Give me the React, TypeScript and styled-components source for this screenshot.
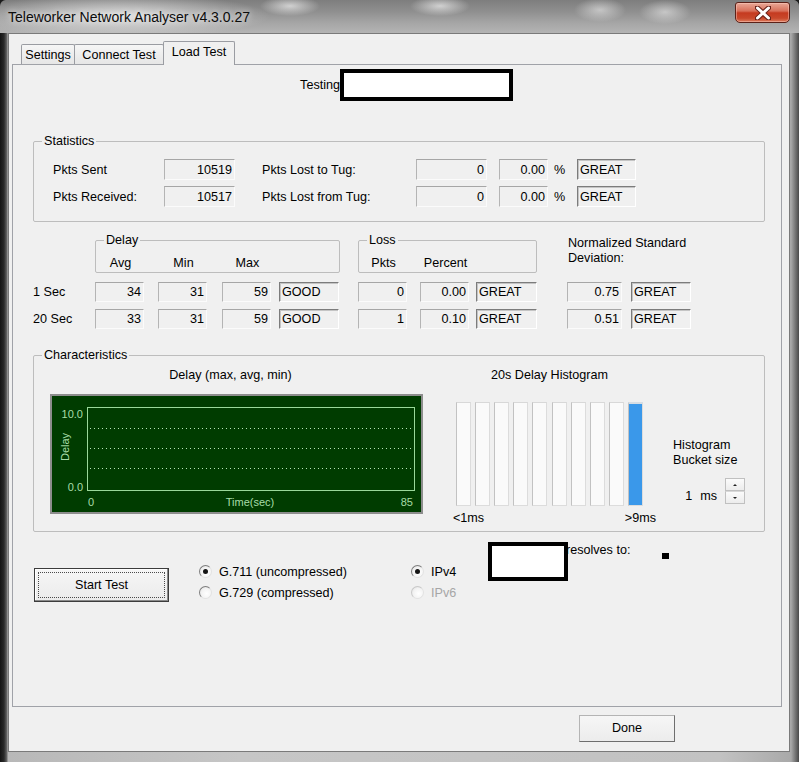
import React from 'react'
import styled, { createGlobalStyle } from 'styled-components'

const GlobalStyle = createGlobalStyle`
  html, body {
    margin: 0;
    padding: 0;
    background: #1b1b1b;
  }
  body {
    font-family: "Liberation Sans", Arial, sans-serif;
  }
`

const Window = styled.div`
  width: 799px;
  height: 762px;
  box-sizing: border-box;
  display: flex;
  flex-direction: column;
  overflow: hidden;
  border-radius: 6px 6px 0 0;
  background: linear-gradient(to right, #141414 0, #2a2a2a 4px, #6a6a6a 7px, #b8b8b8 8px, #c6c6c6 30%, #c2c2c2 90%, #a9a9a9 99%, #4a4a4a 100%);
  font-family: "Liberation Sans", Arial, sans-serif;
  font-size: 12.6px;
  color: #000;
`

const TitleBar = styled.div`
  flex: none;
  height: 33px;
  box-sizing: border-box;
  display: flex;
  justify-content: space-between;
  align-items: flex-start;
  padding: 0 9px 0 8px;
  background:
    radial-gradient(ellipse 150px 22px at 120px 16px, rgba(226, 226, 226, 0.95), rgba(226, 226, 226, 0) 100%),
    radial-gradient(ellipse 30px 10px at 290px 6px, rgba(240, 240, 240, 0.7), rgba(240, 240, 240, 0) 100%),
    radial-gradient(ellipse 30px 10px at 440px 6px, rgba(240, 240, 240, 0.7), rgba(240, 240, 240, 0) 100%),
    radial-gradient(ellipse 26px 12px at 600px 10px, rgba(235, 235, 235, 0.6), rgba(235, 235, 235, 0) 100%),
    radial-gradient(ellipse 26px 12px at 665px 12px, rgba(235, 235, 235, 0.6), rgba(235, 235, 235, 0) 100%),
    linear-gradient(to bottom, #7e7e7e 0, #8f8f8f 35%, #a6a6a6 70%, #b4b4b4 100%);
`

const Title = styled.div`
  margin-top: 8px;
  font-size: 14px;
  line-height: 18px;
  color: #0c0c0c;
  text-shadow: 0 0 6px rgba(255, 255, 255, 0.9);
`

const CloseButton = styled.div`
  margin-top: 2px;
  width: 55px;
  height: 21px;
  box-sizing: border-box;
  border: 1px solid #5b2118;
  border-radius: 3px 3px 5px 5px;
  background: linear-gradient(to bottom, #e9a897 0%, #d8705a 42%, #c53a20 52%, #c9482b 80%, #de7d5e 100%);
  box-shadow: inset 0 0 0 1px rgba(255, 210, 200, 0.45);
  display: flex;
  align-items: center;
  justify-content: center;
`

const Client = styled.div`
  flex: 1;
  margin: 0 9px 10px 8px;
  box-sizing: border-box;
  border: 1px solid #7a7a7a;
  background: #f0f0f0;
  padding: 7px 7px 0 3px;
  display: flex;
  flex-direction: column;
  min-height: 0;
`

const TabStrip = styled.div`
  flex: none;
  height: 23px;
  display: flex;
  align-items: flex-end;
  padding-left: 9px;
`

const Tab = styled.div<{ $w: number; $active?: boolean }>`
  box-sizing: border-box;
  width: ${p => p.$w}px;
  height: ${p => (p.$active ? 24 : 20)}px;
  margin-left: -1px;
  margin-bottom: ${p => (p.$active ? -1 : 0)}px;
  border: 1px solid #9a9ca2;
  border-bottom: none;
  border-radius: 2px 2px 0 0;
  background: ${p => (p.$active ? '#f0f0f0' : 'linear-gradient(to bottom, #f6f6f6, #eeeeee 50%, #e6e6e6)')};
  display: flex;
  align-items: center;
  justify-content: center;
  padding-bottom: ${p => (p.$active ? 3 : 0)}px;
  position: relative;
  z-index: ${p => (p.$active ? 1 : 0)};
  &:first-child {
    margin-left: 0;
  }
`

const Panel = styled.div`
  flex: 1;
  min-height: 0;
  box-sizing: border-box;
  border: 1px solid #a0a2a8;
  background: #f0f0f0;
  padding: 4px 16px 0 20px;
  display: flex;
  flex-direction: column;
`

const TestingRow = styled.div`
  display: flex;
  align-items: center;
  height: 32px;
`

const TestingLabel = styled.div`
  width: 307px;
  text-align: right;
`

const Redacted = styled.div<{ $w: number; $h: number }>`
  box-sizing: border-box;
  width: ${p => p.$w}px;
  height: ${p => p.$h}px;
  border: 4px solid #000;
  background: #fff;
  flex: none;
  position: relative;
  z-index: 1;
`

const Group = styled.fieldset<{ $w?: number; $mt?: number }>`
  margin: ${p => p.$mt ?? 0}px 0 0 0;
  padding: 0;
  min-width: 0;
  box-sizing: border-box;
  width: ${p => (p.$w ? `${p.$w}px` : 'auto')};
  border: 1px solid #bdbdbd;
  border-radius: 2px;
`

const Legend = styled.legend`
  margin-left: 8px;
  padding: 0 2px;
  line-height: 14px;
`

const StatsBody = styled.div`
  padding: 11px 0 14px 19px;
  display: flex;
  flex-direction: column;
  gap: 6px;
`

const StatRow = styled.div`
  display: flex;
  align-items: center;
  height: 21px;
`

const Label = styled.div<{ $w?: number; $ml?: number }>`
  flex: none;
  width: ${p => (p.$w ? `${p.$w}px` : 'auto')};
  margin-left: ${p => p.$ml ?? 0}px;
  white-space: nowrap;
`

const Field = styled.div<{ $w: number; $h?: number; $ml?: number }>`
  flex: none;
  box-sizing: border-box;
  width: ${p => p.$w}px;
  height: ${p => p.$h ?? 20}px;
  margin-left: ${p => p.$ml ?? 0}px;
  border-top: 1px solid #a6a6a6;
  border-left: 1px solid #b4b4b4;
  border-right: 1px solid #fbfbfb;
  border-bottom: 1px solid #fbfbfb;
  background: #f0f0f0;
  display: flex;
  align-items: center;
  justify-content: flex-end;
  padding-right: 2px;
`

const Rating = styled(Field)`
  justify-content: flex-start;
  padding: 0 0 0 2px;
  border-top: 1px solid #7c7c7c;
  border-left: 1px solid #7c7c7c;
  box-shadow: inset 1px 1px 0 #c4c4c4;
  border-right: 1px solid #ffffff;
  border-bottom: 1px solid #ffffff;
`

const Percent = styled.div`
  flex: none;
  width: 29px;
  padding-left: 6px;
  box-sizing: border-box;
`

const Sections = styled.div`
  display: flex;
  margin-top: 11px;
`

const Column = styled.div<{ $w: number; $ml?: number }>`
  flex: none;
  width: ${p => p.$w}px;
  margin-left: ${p => p.$ml ?? 0}px;
  display: flex;
  flex-direction: column;
`

const HeaderArea = styled.div`
  height: 49px;
  box-sizing: border-box;
`

const HeaderGrid = styled.div<{ $cols: string }>`
  display: grid;
  grid-template-columns: ${p => p.$cols};
  padding: 9px 0 2px 0;
  line-height: 14px;
  text-align: center;
`

const NsdText = styled.div`
  padding: 3px 0 0 1px;
  line-height: 15px;
  white-space: nowrap;
`

const RowLabel = styled.div`
  height: 20px;
  display: flex;
  align-items: center;
`

const Rows = styled.div`
  display: flex;
  flex-direction: column;
  gap: 7px;
`

const ValueRow = styled.div`
  display: flex;
  align-items: center;
`

const CharBody = styled.div`
  display: flex;
  align-items: flex-start;
  padding: 6px 0 6px 16px;
`

const PlotTitle = styled.div<{ $shift?: number }>`
  line-height: 14px;
  text-align: center;
  white-space: nowrap;
  padding-right: ${p => p.$shift ?? 0}px;
`

const ChartSvg = styled.svg`
  display: block;
  margin-top: 12px;
`

const Bars = styled.div`
  margin-top: 20px;
  height: 104px;
  display: flex;
  justify-content: space-between;
`

const Bar = styled.div<{ $fill?: boolean }>`
  box-sizing: border-box;
  width: 15px;
  height: 100%;
  border: 1px solid #dcdcdc;
  border-left-color: #c2c2c2;
  border-top: ${p => (p.$fill ? '2px solid #d6dde4' : '1px solid #d8d8d8')};
  background: ${p => (p.$fill ? '#3a98ea' : '#fafafa')};
`

const BarLabels = styled.div`
  margin: 5px -13px 0 -3px;
  line-height: 14px;
  display: flex;
  justify-content: space-between;
`

const BucketText = styled.div`
  padding-top: 70px;
  line-height: 15px;
  white-space: nowrap;
`

const SpinRow = styled.div`
  margin-top: 10px;
  display: flex;
  align-items: flex-end;
  justify-content: flex-end;
`

const SpinText = styled.div<{ $mr: number }>`
  line-height: 14px;
  margin-right: ${p => p.$mr}px;
  padding-bottom: 1px;
`

const Spinner = styled.div`
  width: 20px;
  display: flex;
  flex-direction: column;
`

const SpinHalf = styled.div<{ $down?: boolean }>`
  box-sizing: border-box;
  height: 13px;
  border: 1px solid #c0c0c0;
  border-top-color: ${p => (p.$down ? '#d8d8d8' : '#c0c0c0')};
  background: linear-gradient(to bottom, #fbfbfb, #ececec);
  display: flex;
  align-items: center;
  justify-content: center;
  &::after {
    content: '';
    border-left: 2px solid transparent;
    border-right: 2px solid transparent;
    ${p => (p.$down ? 'border-top: 2px solid #222;' : 'border-bottom: 2px solid #222;')}
  }
`

const BottomRow = styled.div`
  display: flex;
  align-items: flex-start;
  padding-left: 1px;
`

const StartButton = styled.div`
  margin-top: 36px;
  box-sizing: border-box;
  width: 135px;
  height: 34px;
  border: 1px solid #3c3c3c;
  background: linear-gradient(to bottom, #f6f6f6, #ebebeb);
  box-shadow: inset -1px -1px 0 #8a8a8a, inset 1px 1px 0 #ffffff;
  padding: 3px;
  display: flex;
`

const FocusRing = styled.div`
  flex: 1;
  border: 1px dotted #4a4a4a;
  display: flex;
  align-items: center;
  justify-content: center;
  padding-bottom: 1px;
`

const RadioGroup = styled.div<{ $w: number; $ml?: number }>`
  flex: none;
  width: ${p => p.$w}px;
  margin-left: ${p => p.$ml ?? 0}px;
  margin-top: 29px;
  display: flex;
  flex-direction: column;
`

const RadioRow = styled.div<{ $disabled?: boolean }>`
  display: flex;
  align-items: center;
  gap: 7px;
  height: 21px;
  white-space: nowrap;
  color: ${p => (p.$disabled ? '#a6a6a6' : '#000')};
`

const Radio = styled.span<{ $checked?: boolean; $disabled?: boolean }>`
  box-sizing: border-box;
  width: 13px;
  height: 13px;
  flex: none;
  border-radius: 50%;
  border: 1px solid ${p => (p.$disabled ? '#c8c8c8' : '#7e7e7e')};
  border-right-color: #e2e2e2;
  border-bottom-color: #e2e2e2;
  background: radial-gradient(circle at 60% 60%, #ffffff 0, #f3f3f3 55%, #d9d9d9 100%);
  display: flex;
  align-items: center;
  justify-content: center;
  &::after {
    content: '';
    width: 5px;
    height: 5px;
    border-radius: 50%;
    background: ${p => (p.$checked ? '#141414' : 'transparent')};
  }
`

const ResolveBlock = styled.div`
  display: flex;
  align-items: flex-start;
  margin-top: 10px;
`

const ResolveText = styled.div`
  margin: 1px 0 0 -2px;
  line-height: 14px;
  white-space: nowrap;
`

const Dot = styled.div`
  margin: 11px 0 0 32px;
  width: 7px;
  height: 6px;
  background: #000;
`

const Footer = styled.div`
  flex: none;
  display: flex;
  justify-content: flex-end;
  padding: 8px 107px 9px 0;
`

const DoneButton = styled.div`
  box-sizing: border-box;
  width: 96px;
  height: 27px;
  border: 1px solid #b4b4b4;
  border-right-color: #6e6e6e;
  border-bottom-color: #6e6e6e;
  background: linear-gradient(to bottom, #f6f6f6, #ececec);
  display: flex;
  align-items: center;
  justify-content: center;
  padding-bottom: 1px;
`

const CloseGlyph = () => (
  <svg width="16" height="14" viewBox="0 0 16 14">
    <path d="M2 1.5 L14 12.5 M14 1.5 L2 12.5" stroke="#6b231a" strokeWidth="5" strokeLinecap="round" />
    <path d="M2.5 2 L13.5 12 M13.5 2 L2.5 12" stroke="#ffffff" strokeWidth="3" strokeLinecap="round" />
  </svg>
)

const DelayChart = () => (
  <ChartSvg width={373} height={120} viewBox="0 0 373 120">
    <rect x={1} y={1} width={371} height={118} fill="#003c00" stroke="#8d8d8d" strokeWidth={2} />
    <rect x={37.5} y={13.5} width={327} height={83} fill="none" stroke="#9ad89a" strokeWidth={1} />
    {[34, 54, 74].map(y => (
      <line key={y} x1={40} x2={362} y1={y + 0.5} y2={y + 0.5} stroke="#b5e3b5" strokeDasharray="1 3" />
    ))}
    <g fill="#a8dca8" fontSize={11} fontFamily='"Liberation Sans", Arial, sans-serif'>
      <text x={33} y={24} textAnchor="end">10.0</text>
      <text x={33} y={97} textAnchor="end">0.0</text>
      <text transform="translate(19 53) rotate(-90)" textAnchor="middle">Delay</text>
      <text x={38} y={112}>0</text>
      <text x={200} y={112} textAnchor="middle">Time(sec)</text>
      <text x={363} y={112} textAnchor="end">85</text>
    </g>
  </ChartSvg>
)

const delayRows = [
  { label: '1 Sec', avg: 34, min: 31, max: 59, rate: 'GOOD', pkts: 0, pct: '0.00', lossRate: 'GREAT', nsd: '0.75', nsdRate: 'GREAT' },
  { label: '20 Sec', avg: 33, min: 31, max: 59, rate: 'GOOD', pkts: 1, pct: '0.10', lossRate: 'GREAT', nsd: '0.51', nsdRate: 'GREAT' },
]

const App = () => {
  return (
    <>
      <GlobalStyle />
      <Window>
        <TitleBar>
          <Title>Teleworker Network Analyser v4.3.0.27</Title>
          <CloseButton>
            <CloseGlyph />
          </CloseButton>
        </TitleBar>
        <Client>
          <TabStrip>
            <Tab $w={54}>Settings</Tab>
            <Tab $w={90}>Connect Test</Tab>
            <Tab $w={72} $active>Load Test</Tab>
          </TabStrip>
          <Panel>
            <TestingRow>
              <TestingLabel>Testing</TestingLabel>
              <Redacted $w={173} $h={32} />
            </TestingRow>

            <Group $mt={33}>
              <Legend>Statistics</Legend>
              <StatsBody>
                <StatRow>
                  <Label $w={111}>Pkts Sent</Label>
                  <Field $w={71} $h={21}>10519</Field>
                  <Label $w={154} $ml={27}>Pkts Lost to Tug:</Label>
                  <Field $w={71} $h={21}>0</Field>
                  <Field $w={49} $h={21} $ml={12}>0.00</Field>
                  <Percent>%</Percent>
                  <Rating $w={59} $h={21}>GREAT</Rating>
                </StatRow>
                <StatRow>
                  <Label $w={111}>Pkts Received:</Label>
                  <Field $w={71} $h={21}>10517</Field>
                  <Label $w={154} $ml={27}>Pkts Lost from Tug:</Label>
                  <Field $w={71} $h={21}>0</Field>
                  <Field $w={49} $h={21} $ml={12}>0.00</Field>
                  <Percent>%</Percent>
                  <Rating $w={59} $h={21}>GREAT</Rating>
                </StatRow>
              </StatsBody>
            </Group>

            <Sections>
              <Column $w={62}>
                <HeaderArea />
                <Rows>
                  {delayRows.map(r => (
                    <RowLabel key={r.label}>{r.label}</RowLabel>
                  ))}
                </Rows>
              </Column>
              <Column $w={245}>
                <HeaderArea>
                  <Group>
                    <Legend>Delay</Legend>
                    <HeaderGrid $cols="49px 14px 49px 15px 49px 1fr">
                      <span>Avg</span>
                      <span />
                      <span>Min</span>
                      <span />
                      <span>Max</span>
                    </HeaderGrid>
                  </Group>
                </HeaderArea>
                <Rows>
                  {delayRows.map(r => (
                    <ValueRow key={r.label}>
                      <Field $w={49}>{r.avg}</Field>
                      <Field $w={49} $ml={14}>{r.min}</Field>
                      <Field $w={49} $ml={15}>{r.max}</Field>
                      <Rating $w={60} $ml={8}>{r.rate}</Rating>
                    </ValueRow>
                  ))}
                </Rows>
              </Column>
              <Column $w={179} $ml={18}>
                <HeaderArea>
                  <Group>
                    <Legend>Loss</Legend>
                    <HeaderGrid $cols="49px 13px 49px 1fr">
                      <span>Pkts</span>
                      <span />
                      <span>Percent</span>
                    </HeaderGrid>
                  </Group>
                </HeaderArea>
                <Rows>
                  {delayRows.map(r => (
                    <ValueRow key={r.label}>
                      <Field $w={49}>{r.pkts}</Field>
                      <Field $w={49} $ml={13}>{r.pct}</Field>
                      <Rating $w={61} $ml={7}>{r.lossRate}</Rating>
                    </ValueRow>
                  ))}
                </Rows>
              </Column>
              <Column $w={130} $ml={30}>
                <HeaderArea>
                  <NsdText>
                    Normalized Standard
                    <br />
                    Deviation:
                  </NsdText>
                </HeaderArea>
                <Rows>
                  {delayRows.map(r => (
                    <ValueRow key={r.label}>
                      <Field $w={55}>{r.nsd}</Field>
                      <Rating $w={60} $ml={9}>{r.nsdRate}</Rating>
                    </ValueRow>
                  ))}
                </Rows>
              </Column>
            </Sections>

            <Group $mt={19}>
              <Legend>Characteristics</Legend>
              <CharBody>
                <Column $w={373}>
                  <PlotTitle $shift={12}>Delay (max, avg, min)</PlotTitle>
                  <DelayChart />
                </Column>
                <Column $w={187} $ml={33}>
                  <PlotTitle>20s Delay Histogram</PlotTitle>
                  <Bars>
                    {Array.from({ length: 10 }, (_, i) => (
                      <Bar key={i} $fill={i === 9} />
                    ))}
                  </Bars>
                  <BarLabels>
                    <span>&lt;1ms</span>
                    <span>&gt;9ms</span>
                  </BarLabels>
                </Column>
                <Column $w={72} $ml={30}>
                  <BucketText>
                    Histogram
                    <br />
                    Bucket size
                  </BucketText>
                  <SpinRow>
                    <SpinText $mr={8}>1</SpinText>
                    <SpinText $mr={8}>ms</SpinText>
                    <Spinner>
                      <SpinHalf />
                      <SpinHalf $down />
                    </Spinner>
                  </SpinRow>
                </Column>
              </CharBody>
            </Group>

            <BottomRow>
              <StartButton>
                <FocusRing>Start Test</FocusRing>
              </StartButton>
              <RadioGroup $w={212} $ml={30}>
                <RadioRow>
                  <Radio $checked />
                  G.711 (uncompressed)
                </RadioRow>
                <RadioRow>
                  <Radio />
                  G.729 (compressed)
                </RadioRow>
              </RadioGroup>
              <RadioGroup $w={77}>
                <RadioRow>
                  <Radio $checked />
                  IPv4
                </RadioRow>
                <RadioRow $disabled>
                  <Radio $disabled />
                  IPv6
                </RadioRow>
              </RadioGroup>
              <ResolveBlock>
                <Redacted $w={80} $h={39} />
                <ResolveText>resolves to:</ResolveText>
                <Dot />
              </ResolveBlock>
            </BottomRow>
          </Panel>
          <Footer>
            <DoneButton>Done</DoneButton>
          </Footer>
        </Client>
      </Window>
    </>
  )
}

export default App
